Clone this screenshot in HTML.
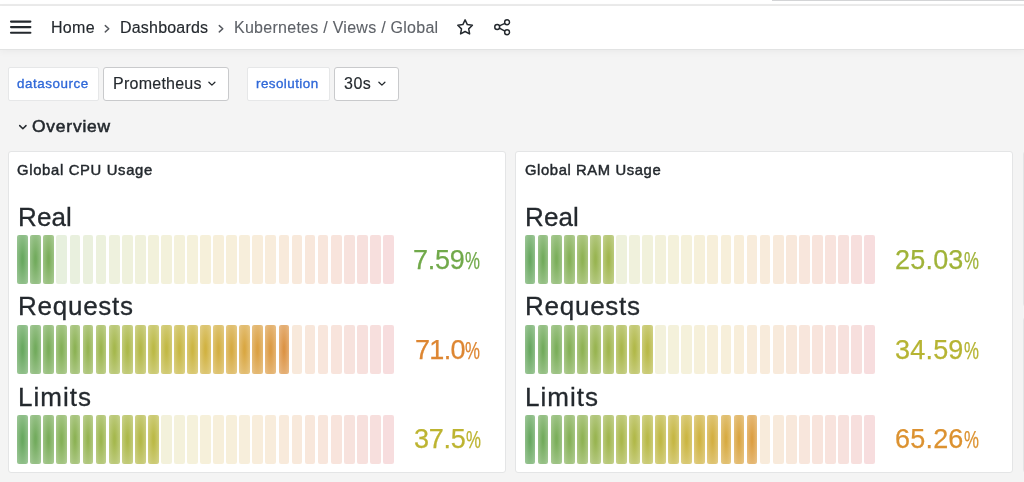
<!DOCTYPE html>
<html><head><meta charset="utf-8">
<style>
html,body{margin:0;padding:0;}
body{width:1024px;height:482px;overflow:hidden;position:relative;background:#f4f4f4;font-family:"Liberation Sans",sans-serif;color:#24292e;}
div{box-sizing:border-box;}
.abs{position:absolute;}
.t{position:absolute;white-space:nowrap;will-change:transform;}
.topstrip{position:absolute;left:0;top:0;width:1024px;height:4px;background:#ffffff;}
.topline{position:absolute;left:0;top:4px;width:1024px;height:2px;background:#ebebeb;}
.tr{position:absolute;left:771.7px;top:0;width:253px;height:1.2px;background:#d3d4d6;}
.header{position:absolute;left:0;top:6px;width:1024px;height:44px;background:#fff;border-bottom:1px solid #e2e3e3;box-shadow:0 2px 7px rgba(0,0,0,0.045);}
.vbox{position:absolute;top:67px;height:34px;background:#fff;border:1px solid #e6e7e8;border-radius:2px;}
.dbox{position:absolute;top:67px;height:34px;background:#fff;border:1px solid #c9cacc;border-radius:3px;}
.panel{position:absolute;top:151px;width:498px;height:322px;background:#fff;border:1px solid #e4e5e6;border-radius:3px;}
.pct{font-size:23px;display:inline-block;transform:scaleX(0.73);transform-origin:0 100%;margin-left:0.6px;letter-spacing:0;}
.c{position:absolute;border-radius:2px;}
</style></head><body>
<div class="topstrip"></div><div class="topline"></div><div class="tr"></div>
<div class="header"></div>
<svg class="abs" style="left:0;top:0" width="60" height="48">
 <g stroke="#24292e" stroke-width="2.1" stroke-linecap="round">
 <line x1="11" y1="21.6" x2="30.4" y2="21.6"/><line x1="11" y1="27.1" x2="30.4" y2="27.1"/><line x1="11" y1="32.7" x2="30.4" y2="32.7"/>
 </g></svg>
<div class="t" style="left:50.60px;top:19.66px;font-size:16px;line-height:16px;letter-spacing:0.3px;-webkit-text-stroke:0.15px #24292e;">Home</div>
<svg class="abs" style="left:99.8px;top:19.6px" width="14" height="16"><polyline points="5.3,5.6 8.8,8.75 5.3,11.9" fill="none" stroke="#55585e" stroke-width="1.45" stroke-linecap="round" stroke-linejoin="round"/></svg>
<div class="t" style="left:120.30px;top:19.66px;font-size:16px;line-height:16px;letter-spacing:0.2px;-webkit-text-stroke:0.15px #24292e;">Dashboards</div>
<svg class="abs" style="left:214.1px;top:19.6px" width="14" height="16"><polyline points="5.3,5.6 8.8,8.75 5.3,11.9" fill="none" stroke="#55585e" stroke-width="1.45" stroke-linecap="round" stroke-linejoin="round"/></svg>
<div class="t" style="left:234.20px;top:19.66px;font-size:16px;line-height:16px;color:#5e6268;letter-spacing:0.27px;-webkit-text-stroke:0.1px #5e6268;">Kubernetes / Views / Global</div>
<svg class="abs" style="left:450px;top:12px" width="30" height="30" viewBox="0 0 30 30">
 <path d="M15.1 7.9 L17.35 12.55 L22.4 13.25 L18.7 16.85 L19.6 21.9 L15.1 19.5 L10.6 21.9 L11.5 16.85 L7.8 13.25 L12.85 12.55 Z" fill="none" stroke="#24292e" stroke-width="1.5" stroke-linejoin="round"/>
</svg>
<svg class="abs" style="left:487px;top:12px" width="30" height="30" viewBox="0 0 30 30">
 <g fill="none" stroke="#24292e" stroke-width="1.45">
 <circle cx="10.2" cy="15" r="2.45"/><circle cx="20.1" cy="10.25" r="2.45"/><circle cx="20.1" cy="20.2" r="2.45"/>
 <line x1="12.4" y1="13.9" x2="17.9" y2="11.3"/><line x1="12.4" y1="16.1" x2="17.9" y2="19.1"/>
 </g></svg>

<div class="vbox" style="left:8px;width:91px;"></div>
<div class="t" style="left:17.30px;top:77.06px;font-size:13.4px;line-height:13.4px;color:#2f68d8;letter-spacing:0.55px;-webkit-text-stroke:0.35px currentColor;">datasource</div>
<div class="dbox" style="left:103px;width:126px;"></div>
<div class="t" style="left:112.60px;top:76.16px;font-size:16px;line-height:16px;letter-spacing:0.25px;-webkit-text-stroke:0.15px #24292e;">Prometheus</div>
<svg class="abs" style="left:204px;top:76px" width="16" height="14"><polyline points="4.9,6.2 7.9,9.15 10.9,6.2" fill="none" stroke="#24292e" stroke-width="1.3" stroke-linecap="round" stroke-linejoin="round"/></svg>
<div class="vbox" style="left:247px;width:83px;"></div>
<div class="t" style="left:255.80px;top:77.06px;font-size:13.4px;line-height:13.4px;color:#2f68d8;letter-spacing:0.45px;-webkit-text-stroke:0.35px currentColor;">resolution</div>
<div class="dbox" style="left:334px;width:65px;"></div>
<div class="t" style="left:344.10px;top:76.16px;font-size:16px;line-height:16px;letter-spacing:0.5px;-webkit-text-stroke:0.15px #24292e;">30s</div>
<svg class="abs" style="left:373.5px;top:76px" width="16" height="14"><polyline points="4.9,6.2 7.9,9.15 10.9,6.2" fill="none" stroke="#24292e" stroke-width="1.3" stroke-linecap="round" stroke-linejoin="round"/></svg>

<svg class="abs" style="left:14px;top:118px" width="18" height="16"><polyline points="5.7,7.6 8.85,10.7 12.0,7.6" fill="none" stroke="#24292e" stroke-width="1.5" stroke-linecap="round" stroke-linejoin="round"/></svg>
<div class="t" style="left:32.00px;top:117.57px;font-size:17.4px;line-height:17.4px;letter-spacing:0.8px;-webkit-text-stroke:0.55px #24292e;">Overview</div>

<div class="panel" style="left:8px;"></div>
<div class="t" style="left:17.30px;top:163.27px;font-size:14.8px;line-height:14.8px;letter-spacing:0.68px;-webkit-text-stroke:0.45px #24292e;">Global CPU Usage</div>
<div class="t" style="left:17.80px;top:203.69px;font-size:26px;line-height:26px;letter-spacing:0.1px;-webkit-text-stroke:0.3px #24292e;">Real</div>
<div class="c" style="left:17.30px;top:235.20px;width:10.8px;height:48.4px;background-image:radial-gradient(rgba(92,161,83,0.92) 10%,rgba(92,161,83,0.58));"></div>
<div class="c" style="left:30.36px;top:235.20px;width:10.8px;height:48.4px;background-image:radial-gradient(rgba(103,164,80,0.92) 10%,rgba(103,164,80,0.58));"></div>
<div class="c" style="left:43.42px;top:235.20px;width:10.8px;height:48.4px;background-image:radial-gradient(rgba(112,167,76,0.92) 10%,rgba(112,167,76,0.58));"></div>
<div class="c" style="left:56.48px;top:235.20px;width:10.8px;height:48.4px;background:rgba(122,170,74,0.18);"></div>
<div class="c" style="left:69.54px;top:235.20px;width:10.8px;height:48.4px;background:rgba(131,172,72,0.18);"></div>
<div class="c" style="left:82.60px;top:235.20px;width:10.8px;height:48.4px;background:rgba(141,174,69,0.18);"></div>
<div class="c" style="left:95.66px;top:235.20px;width:10.8px;height:48.4px;background:rgba(149,175,66,0.18);"></div>
<div class="c" style="left:108.72px;top:235.20px;width:10.8px;height:48.4px;background:rgba(158,178,64,0.18);"></div>
<div class="c" style="left:121.78px;top:235.20px;width:10.8px;height:48.4px;background:rgba(166,179,62,0.18);"></div>
<div class="c" style="left:134.84px;top:235.20px;width:10.8px;height:48.4px;background:rgba(174,179,59,0.18);"></div>
<div class="c" style="left:147.90px;top:235.20px;width:10.8px;height:48.4px;background:rgba(181,180,57,0.18);"></div>
<div class="c" style="left:160.96px;top:235.20px;width:10.8px;height:48.4px;background:rgba(188,179,56,0.18);"></div>
<div class="c" style="left:174.02px;top:235.20px;width:10.8px;height:48.4px;background:rgba(194,177,54,0.18);"></div>
<div class="c" style="left:187.08px;top:235.20px;width:10.8px;height:48.4px;background:rgba(200,176,53,0.18);"></div>
<div class="c" style="left:200.14px;top:235.20px;width:10.8px;height:48.4px;background:rgba(205,172,52,0.18);"></div>
<div class="c" style="left:213.20px;top:235.20px;width:10.8px;height:48.4px;background:rgba(208,169,52,0.18);"></div>
<div class="c" style="left:226.26px;top:235.20px;width:10.8px;height:48.4px;background:rgba(211,164,52,0.18);"></div>
<div class="c" style="left:239.32px;top:235.20px;width:10.8px;height:48.4px;background:rgba(213,160,53,0.18);"></div>
<div class="c" style="left:252.38px;top:235.20px;width:10.8px;height:48.4px;background:rgba(215,153,53,0.18);"></div>
<div class="c" style="left:265.44px;top:235.20px;width:10.8px;height:48.4px;background:rgba(217,147,54,0.18);"></div>
<div class="c" style="left:278.50px;top:235.20px;width:10.8px;height:48.4px;background:rgba(217,139,55,0.18);"></div>
<div class="c" style="left:291.56px;top:235.20px;width:10.8px;height:48.4px;background:rgba(217,131,56,0.18);"></div>
<div class="c" style="left:304.62px;top:235.20px;width:10.8px;height:48.4px;background:rgba(216,123,58,0.18);"></div>
<div class="c" style="left:317.68px;top:235.20px;width:10.8px;height:48.4px;background:rgba(215,114,60,0.18);"></div>
<div class="c" style="left:330.74px;top:235.20px;width:10.8px;height:48.4px;background:rgba(215,105,62,0.18);"></div>
<div class="c" style="left:343.80px;top:235.20px;width:10.8px;height:48.4px;background:rgba(213,96,64,0.18);"></div>
<div class="c" style="left:356.86px;top:235.20px;width:10.8px;height:48.4px;background:rgba(211,85,67,0.18);"></div>
<div class="c" style="left:369.92px;top:235.20px;width:10.8px;height:48.4px;background:rgba(209,76,68,0.18);"></div>
<div class="c" style="left:382.98px;top:235.20px;width:10.8px;height:48.4px;background:rgba(208,66,71,0.18);"></div>
<div class="t" style="left:413.40px;top:246.64px;font-size:27px;line-height:27px;color:#71a94a;letter-spacing:-0.3px;-webkit-text-stroke:0.25px #71a94a;">7.59<span class="pct">%</span></div>
<div class="t" style="left:17.80px;top:293.39px;font-size:26px;line-height:26px;letter-spacing:0.75px;-webkit-text-stroke:0.3px #24292e;">Requests</div>
<div class="c" style="left:17.30px;top:325.20px;width:10.8px;height:48.4px;background-image:radial-gradient(rgba(92,161,83,0.92) 10%,rgba(92,161,83,0.58));"></div>
<div class="c" style="left:30.36px;top:325.20px;width:10.8px;height:48.4px;background-image:radial-gradient(rgba(103,164,80,0.92) 10%,rgba(103,164,80,0.58));"></div>
<div class="c" style="left:43.42px;top:325.20px;width:10.8px;height:48.4px;background-image:radial-gradient(rgba(112,167,76,0.92) 10%,rgba(112,167,76,0.58));"></div>
<div class="c" style="left:56.48px;top:325.20px;width:10.8px;height:48.4px;background-image:radial-gradient(rgba(122,170,74,0.92) 10%,rgba(122,170,74,0.58));"></div>
<div class="c" style="left:69.54px;top:325.20px;width:10.8px;height:48.4px;background-image:radial-gradient(rgba(131,172,71,0.92) 10%,rgba(131,172,71,0.58));"></div>
<div class="c" style="left:82.60px;top:325.20px;width:10.8px;height:48.4px;background-image:radial-gradient(rgba(141,174,68,0.92) 10%,rgba(141,174,68,0.58));"></div>
<div class="c" style="left:95.66px;top:325.20px;width:10.8px;height:48.4px;background-image:radial-gradient(rgba(149,176,65,0.92) 10%,rgba(149,176,65,0.58));"></div>
<div class="c" style="left:108.72px;top:325.20px;width:10.8px;height:48.4px;background-image:radial-gradient(rgba(158,178,63,0.92) 10%,rgba(158,178,63,0.58));"></div>
<div class="c" style="left:121.78px;top:325.20px;width:10.8px;height:48.4px;background-image:radial-gradient(rgba(166,179,60,0.92) 10%,rgba(166,179,60,0.58));"></div>
<div class="c" style="left:134.84px;top:325.20px;width:10.8px;height:48.4px;background-image:radial-gradient(rgba(174,179,58,0.92) 10%,rgba(174,179,58,0.58));"></div>
<div class="c" style="left:147.90px;top:325.20px;width:10.8px;height:48.4px;background-image:radial-gradient(rgba(182,180,56,0.92) 10%,rgba(182,180,56,0.58));"></div>
<div class="c" style="left:160.96px;top:325.20px;width:10.8px;height:48.4px;background-image:radial-gradient(rgba(189,179,54,0.92) 10%,rgba(189,179,54,0.58));"></div>
<div class="c" style="left:174.02px;top:325.20px;width:10.8px;height:48.4px;background-image:radial-gradient(rgba(195,178,53,0.92) 10%,rgba(195,178,53,0.58));"></div>
<div class="c" style="left:187.08px;top:325.20px;width:10.8px;height:48.4px;background-image:radial-gradient(rgba(200,176,52,0.92) 10%,rgba(200,176,52,0.58));"></div>
<div class="c" style="left:200.14px;top:325.20px;width:10.8px;height:48.4px;background-image:radial-gradient(rgba(205,172,51,0.92) 10%,rgba(205,172,51,0.58));"></div>
<div class="c" style="left:213.20px;top:325.20px;width:10.8px;height:48.4px;background-image:radial-gradient(rgba(208,169,51,0.92) 10%,rgba(208,169,51,0.58));"></div>
<div class="c" style="left:226.26px;top:325.20px;width:10.8px;height:48.4px;background-image:radial-gradient(rgba(211,164,51,0.92) 10%,rgba(211,164,51,0.58));"></div>
<div class="c" style="left:239.32px;top:325.20px;width:10.8px;height:48.4px;background-image:radial-gradient(rgba(214,160,51,0.92) 10%,rgba(214,160,51,0.58));"></div>
<div class="c" style="left:252.38px;top:325.20px;width:10.8px;height:48.4px;background-image:radial-gradient(rgba(216,153,52,0.92) 10%,rgba(216,153,52,0.58));"></div>
<div class="c" style="left:265.44px;top:325.20px;width:10.8px;height:48.4px;background-image:radial-gradient(rgba(217,147,53,0.92) 10%,rgba(217,147,53,0.58));"></div>
<div class="c" style="left:278.50px;top:325.20px;width:10.8px;height:48.4px;background-image:radial-gradient(rgba(217,139,54,0.92) 10%,rgba(217,139,54,0.58));"></div>
<div class="c" style="left:291.56px;top:325.20px;width:10.8px;height:48.4px;background:rgba(217,131,56,0.18);"></div>
<div class="c" style="left:304.62px;top:325.20px;width:10.8px;height:48.4px;background:rgba(216,123,58,0.18);"></div>
<div class="c" style="left:317.68px;top:325.20px;width:10.8px;height:48.4px;background:rgba(215,114,60,0.18);"></div>
<div class="c" style="left:330.74px;top:325.20px;width:10.8px;height:48.4px;background:rgba(215,105,62,0.18);"></div>
<div class="c" style="left:343.80px;top:325.20px;width:10.8px;height:48.4px;background:rgba(213,96,64,0.18);"></div>
<div class="c" style="left:356.86px;top:325.20px;width:10.8px;height:48.4px;background:rgba(211,85,67,0.18);"></div>
<div class="c" style="left:369.92px;top:325.20px;width:10.8px;height:48.4px;background:rgba(209,76,68,0.18);"></div>
<div class="c" style="left:382.98px;top:325.20px;width:10.8px;height:48.4px;background:rgba(208,66,71,0.18);"></div>
<div class="t" style="left:415.20px;top:336.64px;font-size:27px;line-height:27px;color:#dd8632;letter-spacing:-0.7px;-webkit-text-stroke:0.25px #dd8632;">71.0<span class="pct">%</span></div>
<div class="t" style="left:17.80px;top:383.99px;font-size:26px;line-height:26px;letter-spacing:1.0px;-webkit-text-stroke:0.3px #24292e;">Limits</div>
<div class="c" style="left:17.30px;top:415.20px;width:10.8px;height:48.4px;background-image:radial-gradient(rgba(92,161,83,0.92) 10%,rgba(92,161,83,0.58));"></div>
<div class="c" style="left:30.36px;top:415.20px;width:10.8px;height:48.4px;background-image:radial-gradient(rgba(103,164,80,0.92) 10%,rgba(103,164,80,0.58));"></div>
<div class="c" style="left:43.42px;top:415.20px;width:10.8px;height:48.4px;background-image:radial-gradient(rgba(112,167,76,0.92) 10%,rgba(112,167,76,0.58));"></div>
<div class="c" style="left:56.48px;top:415.20px;width:10.8px;height:48.4px;background-image:radial-gradient(rgba(122,170,74,0.92) 10%,rgba(122,170,74,0.58));"></div>
<div class="c" style="left:69.54px;top:415.20px;width:10.8px;height:48.4px;background-image:radial-gradient(rgba(131,172,71,0.92) 10%,rgba(131,172,71,0.58));"></div>
<div class="c" style="left:82.60px;top:415.20px;width:10.8px;height:48.4px;background-image:radial-gradient(rgba(141,174,68,0.92) 10%,rgba(141,174,68,0.58));"></div>
<div class="c" style="left:95.66px;top:415.20px;width:10.8px;height:48.4px;background-image:radial-gradient(rgba(149,176,65,0.92) 10%,rgba(149,176,65,0.58));"></div>
<div class="c" style="left:108.72px;top:415.20px;width:10.8px;height:48.4px;background-image:radial-gradient(rgba(158,178,63,0.92) 10%,rgba(158,178,63,0.58));"></div>
<div class="c" style="left:121.78px;top:415.20px;width:10.8px;height:48.4px;background-image:radial-gradient(rgba(166,179,60,0.92) 10%,rgba(166,179,60,0.58));"></div>
<div class="c" style="left:134.84px;top:415.20px;width:10.8px;height:48.4px;background-image:radial-gradient(rgba(174,179,58,0.92) 10%,rgba(174,179,58,0.58));"></div>
<div class="c" style="left:147.90px;top:415.20px;width:10.8px;height:48.4px;background-image:radial-gradient(rgba(182,180,56,0.92) 10%,rgba(182,180,56,0.58));"></div>
<div class="c" style="left:160.96px;top:415.20px;width:10.8px;height:48.4px;background:rgba(188,179,56,0.18);"></div>
<div class="c" style="left:174.02px;top:415.20px;width:10.8px;height:48.4px;background:rgba(194,177,54,0.18);"></div>
<div class="c" style="left:187.08px;top:415.20px;width:10.8px;height:48.4px;background:rgba(200,176,53,0.18);"></div>
<div class="c" style="left:200.14px;top:415.20px;width:10.8px;height:48.4px;background:rgba(205,172,52,0.18);"></div>
<div class="c" style="left:213.20px;top:415.20px;width:10.8px;height:48.4px;background:rgba(208,169,52,0.18);"></div>
<div class="c" style="left:226.26px;top:415.20px;width:10.8px;height:48.4px;background:rgba(211,164,52,0.18);"></div>
<div class="c" style="left:239.32px;top:415.20px;width:10.8px;height:48.4px;background:rgba(213,160,53,0.18);"></div>
<div class="c" style="left:252.38px;top:415.20px;width:10.8px;height:48.4px;background:rgba(215,153,53,0.18);"></div>
<div class="c" style="left:265.44px;top:415.20px;width:10.8px;height:48.4px;background:rgba(217,147,54,0.18);"></div>
<div class="c" style="left:278.50px;top:415.20px;width:10.8px;height:48.4px;background:rgba(217,139,55,0.18);"></div>
<div class="c" style="left:291.56px;top:415.20px;width:10.8px;height:48.4px;background:rgba(217,131,56,0.18);"></div>
<div class="c" style="left:304.62px;top:415.20px;width:10.8px;height:48.4px;background:rgba(216,123,58,0.18);"></div>
<div class="c" style="left:317.68px;top:415.20px;width:10.8px;height:48.4px;background:rgba(215,114,60,0.18);"></div>
<div class="c" style="left:330.74px;top:415.20px;width:10.8px;height:48.4px;background:rgba(215,105,62,0.18);"></div>
<div class="c" style="left:343.80px;top:415.20px;width:10.8px;height:48.4px;background:rgba(213,96,64,0.18);"></div>
<div class="c" style="left:356.86px;top:415.20px;width:10.8px;height:48.4px;background:rgba(211,85,67,0.18);"></div>
<div class="c" style="left:369.92px;top:415.20px;width:10.8px;height:48.4px;background:rgba(209,76,68,0.18);"></div>
<div class="c" style="left:382.98px;top:415.20px;width:10.8px;height:48.4px;background:rgba(208,66,71,0.18);"></div>
<div class="t" style="left:414.00px;top:426.44px;font-size:27px;line-height:27px;color:#bdb431;letter-spacing:-0.3px;-webkit-text-stroke:0.25px #bdb431;">37.5<span class="pct">%</span></div>
<div class="panel" style="left:515px;"></div>
<div class="t" style="left:524.60px;top:163.27px;font-size:14.8px;line-height:14.8px;letter-spacing:0.6px;-webkit-text-stroke:0.45px #24292e;">Global RAM Usage</div>
<div class="t" style="left:525.10px;top:203.69px;font-size:26px;line-height:26px;letter-spacing:0.1px;-webkit-text-stroke:0.3px #24292e;">Real</div>
<div class="c" style="left:524.60px;top:235.20px;width:10.8px;height:48.4px;background-image:radial-gradient(rgba(92,161,83,0.92) 10%,rgba(92,161,83,0.58));"></div>
<div class="c" style="left:537.66px;top:235.20px;width:10.8px;height:48.4px;background-image:radial-gradient(rgba(103,164,79,0.92) 10%,rgba(103,164,79,0.58));"></div>
<div class="c" style="left:550.72px;top:235.20px;width:10.8px;height:48.4px;background-image:radial-gradient(rgba(113,168,77,0.92) 10%,rgba(113,168,77,0.58));"></div>
<div class="c" style="left:563.78px;top:235.20px;width:10.8px;height:48.4px;background-image:radial-gradient(rgba(123,170,73,0.92) 10%,rgba(123,170,73,0.58));"></div>
<div class="c" style="left:576.84px;top:235.20px;width:10.8px;height:48.4px;background-image:radial-gradient(rgba(134,172,70,0.92) 10%,rgba(134,172,70,0.58));"></div>
<div class="c" style="left:589.90px;top:235.20px;width:10.8px;height:48.4px;background-image:radial-gradient(rgba(144,174,67,0.92) 10%,rgba(144,174,67,0.58));"></div>
<div class="c" style="left:602.96px;top:235.20px;width:10.8px;height:48.4px;background-image:radial-gradient(rgba(154,177,64,0.92) 10%,rgba(154,177,64,0.58));"></div>
<div class="c" style="left:616.02px;top:235.20px;width:10.8px;height:48.4px;background:rgba(163,178,62,0.18);"></div>
<div class="c" style="left:629.08px;top:235.20px;width:10.8px;height:48.4px;background:rgba(171,179,60,0.18);"></div>
<div class="c" style="left:642.14px;top:235.20px;width:10.8px;height:48.4px;background:rgba(179,180,58,0.18);"></div>
<div class="c" style="left:655.20px;top:235.20px;width:10.8px;height:48.4px;background:rgba(187,179,56,0.18);"></div>
<div class="c" style="left:668.26px;top:235.20px;width:10.8px;height:48.4px;background:rgba(193,177,54,0.18);"></div>
<div class="c" style="left:681.32px;top:235.20px;width:10.8px;height:48.4px;background:rgba(199,176,53,0.18);"></div>
<div class="c" style="left:694.38px;top:235.20px;width:10.8px;height:48.4px;background:rgba(204,173,52,0.18);"></div>
<div class="c" style="left:707.44px;top:235.20px;width:10.8px;height:48.4px;background:rgba(208,169,52,0.18);"></div>
<div class="c" style="left:720.50px;top:235.20px;width:10.8px;height:48.4px;background:rgba(212,164,52,0.18);"></div>
<div class="c" style="left:733.56px;top:235.20px;width:10.8px;height:48.4px;background:rgba(214,158,52,0.18);"></div>
<div class="c" style="left:746.62px;top:235.20px;width:10.8px;height:48.4px;background:rgba(216,151,54,0.18);"></div>
<div class="c" style="left:759.68px;top:235.20px;width:10.8px;height:48.4px;background:rgba(216,144,55,0.18);"></div>
<div class="c" style="left:772.74px;top:235.20px;width:10.8px;height:48.4px;background:rgba(217,136,56,0.18);"></div>
<div class="c" style="left:785.80px;top:235.20px;width:10.8px;height:48.4px;background:rgba(217,127,58,0.18);"></div>
<div class="c" style="left:798.86px;top:235.20px;width:10.8px;height:48.4px;background:rgba(216,118,59,0.18);"></div>
<div class="c" style="left:811.92px;top:235.20px;width:10.8px;height:48.4px;background:rgba(215,108,61,0.18);"></div>
<div class="c" style="left:824.98px;top:235.20px;width:10.8px;height:48.4px;background:rgba(214,98,64,0.18);"></div>
<div class="c" style="left:838.04px;top:235.20px;width:10.8px;height:48.4px;background:rgba(212,88,66,0.18);"></div>
<div class="c" style="left:851.10px;top:235.20px;width:10.8px;height:48.4px;background:rgba(210,77,68,0.18);"></div>
<div class="c" style="left:864.16px;top:235.20px;width:10.8px;height:48.4px;background:rgba(208,67,71,0.18);"></div>
<div class="t" style="left:894.80px;top:246.64px;font-size:27px;line-height:27px;color:#a0b339;letter-spacing:0.2px;-webkit-text-stroke:0.25px #a0b339;">25.03<span class="pct">%</span></div>
<div class="t" style="left:525.10px;top:293.39px;font-size:26px;line-height:26px;letter-spacing:0.75px;-webkit-text-stroke:0.3px #24292e;">Requests</div>
<div class="c" style="left:524.60px;top:325.20px;width:10.8px;height:48.4px;background-image:radial-gradient(rgba(92,161,83,0.92) 10%,rgba(92,161,83,0.58));"></div>
<div class="c" style="left:537.66px;top:325.20px;width:10.8px;height:48.4px;background-image:radial-gradient(rgba(103,164,79,0.92) 10%,rgba(103,164,79,0.58));"></div>
<div class="c" style="left:550.72px;top:325.20px;width:10.8px;height:48.4px;background-image:radial-gradient(rgba(113,168,77,0.92) 10%,rgba(113,168,77,0.58));"></div>
<div class="c" style="left:563.78px;top:325.20px;width:10.8px;height:48.4px;background-image:radial-gradient(rgba(123,170,73,0.92) 10%,rgba(123,170,73,0.58));"></div>
<div class="c" style="left:576.84px;top:325.20px;width:10.8px;height:48.4px;background-image:radial-gradient(rgba(134,172,70,0.92) 10%,rgba(134,172,70,0.58));"></div>
<div class="c" style="left:589.90px;top:325.20px;width:10.8px;height:48.4px;background-image:radial-gradient(rgba(144,174,67,0.92) 10%,rgba(144,174,67,0.58));"></div>
<div class="c" style="left:602.96px;top:325.20px;width:10.8px;height:48.4px;background-image:radial-gradient(rgba(154,177,64,0.92) 10%,rgba(154,177,64,0.58));"></div>
<div class="c" style="left:616.02px;top:325.20px;width:10.8px;height:48.4px;background-image:radial-gradient(rgba(163,178,61,0.92) 10%,rgba(163,178,61,0.58));"></div>
<div class="c" style="left:629.08px;top:325.20px;width:10.8px;height:48.4px;background-image:radial-gradient(rgba(171,179,59,0.92) 10%,rgba(171,179,59,0.58));"></div>
<div class="c" style="left:642.14px;top:325.20px;width:10.8px;height:48.4px;background-image:radial-gradient(rgba(179,180,57,0.92) 10%,rgba(179,180,57,0.58));"></div>
<div class="c" style="left:655.20px;top:325.20px;width:10.8px;height:48.4px;background:rgba(187,179,56,0.18);"></div>
<div class="c" style="left:668.26px;top:325.20px;width:10.8px;height:48.4px;background:rgba(193,177,54,0.18);"></div>
<div class="c" style="left:681.32px;top:325.20px;width:10.8px;height:48.4px;background:rgba(199,176,53,0.18);"></div>
<div class="c" style="left:694.38px;top:325.20px;width:10.8px;height:48.4px;background:rgba(204,173,52,0.18);"></div>
<div class="c" style="left:707.44px;top:325.20px;width:10.8px;height:48.4px;background:rgba(208,169,52,0.18);"></div>
<div class="c" style="left:720.50px;top:325.20px;width:10.8px;height:48.4px;background:rgba(212,164,52,0.18);"></div>
<div class="c" style="left:733.56px;top:325.20px;width:10.8px;height:48.4px;background:rgba(214,158,52,0.18);"></div>
<div class="c" style="left:746.62px;top:325.20px;width:10.8px;height:48.4px;background:rgba(216,151,54,0.18);"></div>
<div class="c" style="left:759.68px;top:325.20px;width:10.8px;height:48.4px;background:rgba(216,144,55,0.18);"></div>
<div class="c" style="left:772.74px;top:325.20px;width:10.8px;height:48.4px;background:rgba(217,136,56,0.18);"></div>
<div class="c" style="left:785.80px;top:325.20px;width:10.8px;height:48.4px;background:rgba(217,127,58,0.18);"></div>
<div class="c" style="left:798.86px;top:325.20px;width:10.8px;height:48.4px;background:rgba(216,118,59,0.18);"></div>
<div class="c" style="left:811.92px;top:325.20px;width:10.8px;height:48.4px;background:rgba(215,108,61,0.18);"></div>
<div class="c" style="left:824.98px;top:325.20px;width:10.8px;height:48.4px;background:rgba(214,98,64,0.18);"></div>
<div class="c" style="left:838.04px;top:325.20px;width:10.8px;height:48.4px;background:rgba(212,88,66,0.18);"></div>
<div class="c" style="left:851.10px;top:325.20px;width:10.8px;height:48.4px;background:rgba(210,77,68,0.18);"></div>
<div class="c" style="left:864.16px;top:325.20px;width:10.8px;height:48.4px;background:rgba(208,67,71,0.18);"></div>
<div class="t" style="left:894.80px;top:336.64px;font-size:27px;line-height:27px;color:#b6b433;letter-spacing:0.2px;-webkit-text-stroke:0.25px #b6b433;">34.59<span class="pct">%</span></div>
<div class="t" style="left:525.10px;top:383.99px;font-size:26px;line-height:26px;letter-spacing:1.0px;-webkit-text-stroke:0.3px #24292e;">Limits</div>
<div class="c" style="left:524.60px;top:415.20px;width:10.8px;height:48.4px;background-image:radial-gradient(rgba(92,161,83,0.92) 10%,rgba(92,161,83,0.58));"></div>
<div class="c" style="left:537.66px;top:415.20px;width:10.8px;height:48.4px;background-image:radial-gradient(rgba(103,164,79,0.92) 10%,rgba(103,164,79,0.58));"></div>
<div class="c" style="left:550.72px;top:415.20px;width:10.8px;height:48.4px;background-image:radial-gradient(rgba(113,168,77,0.92) 10%,rgba(113,168,77,0.58));"></div>
<div class="c" style="left:563.78px;top:415.20px;width:10.8px;height:48.4px;background-image:radial-gradient(rgba(123,170,73,0.92) 10%,rgba(123,170,73,0.58));"></div>
<div class="c" style="left:576.84px;top:415.20px;width:10.8px;height:48.4px;background-image:radial-gradient(rgba(134,172,70,0.92) 10%,rgba(134,172,70,0.58));"></div>
<div class="c" style="left:589.90px;top:415.20px;width:10.8px;height:48.4px;background-image:radial-gradient(rgba(144,174,67,0.92) 10%,rgba(144,174,67,0.58));"></div>
<div class="c" style="left:602.96px;top:415.20px;width:10.8px;height:48.4px;background-image:radial-gradient(rgba(154,177,64,0.92) 10%,rgba(154,177,64,0.58));"></div>
<div class="c" style="left:616.02px;top:415.20px;width:10.8px;height:48.4px;background-image:radial-gradient(rgba(163,178,61,0.92) 10%,rgba(163,178,61,0.58));"></div>
<div class="c" style="left:629.08px;top:415.20px;width:10.8px;height:48.4px;background-image:radial-gradient(rgba(171,179,59,0.92) 10%,rgba(171,179,59,0.58));"></div>
<div class="c" style="left:642.14px;top:415.20px;width:10.8px;height:48.4px;background-image:radial-gradient(rgba(179,180,57,0.92) 10%,rgba(179,180,57,0.58));"></div>
<div class="c" style="left:655.20px;top:415.20px;width:10.8px;height:48.4px;background-image:radial-gradient(rgba(187,179,54,0.92) 10%,rgba(187,179,54,0.58));"></div>
<div class="c" style="left:668.26px;top:415.20px;width:10.8px;height:48.4px;background-image:radial-gradient(rgba(193,177,53,0.92) 10%,rgba(193,177,53,0.58));"></div>
<div class="c" style="left:681.32px;top:415.20px;width:10.8px;height:48.4px;background-image:radial-gradient(rgba(199,176,52,0.92) 10%,rgba(199,176,52,0.58));"></div>
<div class="c" style="left:694.38px;top:415.20px;width:10.8px;height:48.4px;background-image:radial-gradient(rgba(204,173,51,0.92) 10%,rgba(204,173,51,0.58));"></div>
<div class="c" style="left:707.44px;top:415.20px;width:10.8px;height:48.4px;background-image:radial-gradient(rgba(208,169,51,0.92) 10%,rgba(208,169,51,0.58));"></div>
<div class="c" style="left:720.50px;top:415.20px;width:10.8px;height:48.4px;background-image:radial-gradient(rgba(212,164,51,0.92) 10%,rgba(212,164,51,0.58));"></div>
<div class="c" style="left:733.56px;top:415.20px;width:10.8px;height:48.4px;background-image:radial-gradient(rgba(215,158,51,0.92) 10%,rgba(215,158,51,0.58));"></div>
<div class="c" style="left:746.62px;top:415.20px;width:10.8px;height:48.4px;background-image:radial-gradient(rgba(217,151,52,0.92) 10%,rgba(217,151,52,0.58));"></div>
<div class="c" style="left:759.68px;top:415.20px;width:10.8px;height:48.4px;background:rgba(216,144,55,0.18);"></div>
<div class="c" style="left:772.74px;top:415.20px;width:10.8px;height:48.4px;background:rgba(217,136,56,0.18);"></div>
<div class="c" style="left:785.80px;top:415.20px;width:10.8px;height:48.4px;background:rgba(217,127,58,0.18);"></div>
<div class="c" style="left:798.86px;top:415.20px;width:10.8px;height:48.4px;background:rgba(216,118,59,0.18);"></div>
<div class="c" style="left:811.92px;top:415.20px;width:10.8px;height:48.4px;background:rgba(215,108,61,0.18);"></div>
<div class="c" style="left:824.98px;top:415.20px;width:10.8px;height:48.4px;background:rgba(214,98,64,0.18);"></div>
<div class="c" style="left:838.04px;top:415.20px;width:10.8px;height:48.4px;background:rgba(212,88,66,0.18);"></div>
<div class="c" style="left:851.10px;top:415.20px;width:10.8px;height:48.4px;background:rgba(210,77,68,0.18);"></div>
<div class="c" style="left:864.16px;top:415.20px;width:10.8px;height:48.4px;background:rgba(208,67,71,0.18);"></div>
<div class="t" style="left:894.80px;top:426.44px;font-size:27px;line-height:27px;color:#dc9230;letter-spacing:0.2px;-webkit-text-stroke:0.25px #dc9230;">65.26<span class="pct">%</span></div>
<div class="panel" style="left:1023px;height:156px;"></div><div class="panel" style="left:1023px;top:317px;height:156px;"></div>
</body></html>
